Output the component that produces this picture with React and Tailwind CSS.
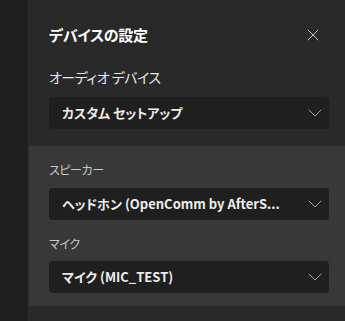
import { X, ChevronDown } from 'lucide-react'

function Select({ value }) {
  return (
    <div className="h-[32px] rounded-[4px] bg-[#1f1f1f] flex items-center pl-[13px] pr-[2px]">
      <span className="min-w-0 whitespace-nowrap text-[13px] leading-[20px] font-bold text-[#ececec]">
        {value}
      </span>
      <div className="flex-1" />
      <ChevronDown size={24} strokeWidth={1} className="text-[#a8a8a8] flex-shrink-0" />
    </div>
  )
}

export default function App() {
  return (
    <div
      className="w-[345px] h-[321px] flex bg-[#292929] overflow-hidden [font-feature-settings:'palt']"
      style={{ fontFamily: '"Noto Sans CJK JP", "Noto Sans", sans-serif' }}
    >
      <div className="w-[29px] bg-[#1f1f1f] border-r border-[#2f2f2f] flex-shrink-0" />
      <div className="flex-1 min-w-0 flex flex-col">
        <div className="pl-5 pr-4 pt-[24px] pb-[17px]">
          <div className="flex items-center justify-between">
            <h1 className="text-[15px] leading-[22px] font-bold text-white tracking-[-0.3px]">デバイスの設定</h1>
            <X size={20} strokeWidth={1.1} className="text-[#d0d0d0] mr-[6px]" />
          </div>
          <p className="mt-[21px] text-[14px] leading-[20px] text-[#e8e8e8] tracking-[-0.5px]">オーディオ デバイス</p>
          <div className="mt-[10px]">
            <Select value="カスタム セットアップ" />
          </div>
        </div>
        <div className="bg-[#383838] pl-5 pr-4 pt-[16px] pb-[13px]">
          <p className="text-[12px] leading-[16px] text-[#c8c8c8] tracking-[-0.4px]">スピーカー</p>
          <div className="mt-[10px]">
            <Select value="ヘッドホン (OpenComm by AfterS..." />
          </div>
          <p className="mt-[16px] text-[12px] leading-[16px] text-[#c8c8c8] tracking-[-0.4px]">マイク</p>
          <div className="mt-[9px]">
            <Select value="マイク (MIC_TEST)" />
          </div>
        </div>
        <div className="flex-1" />
      </div>
    </div>
  )
}
